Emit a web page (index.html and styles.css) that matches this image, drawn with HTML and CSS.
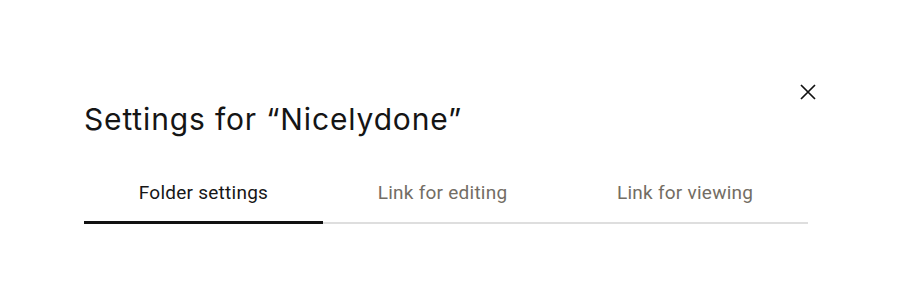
FILE: index.html
```html
<!DOCTYPE html>
<html lang="en">
<head>
<meta charset="utf-8">
<link rel="stylesheet" href="styles.css">
</head>
<body>
<div class="dialog">
  <div class="header">
    <h1 class="title">Settings for “Nicelydone”</h1>
    <button class="close" aria-label="Close">
      <svg width="16" height="16" viewBox="0 0 16 16"><path d="M1 1L15 15M15 1L1 15" stroke="#111" stroke-width="1.7" fill="none"/></svg>
    </button>
  </div>
  <div class="tabs">
    <div class="tab active">Folder settings</div>
    <div class="tab">Link for editing</div>
    <div class="tab">Link for viewing</div>
  </div>
</div>
</body>
</html>
```
FILE: styles.css
```css
html, body {
  margin: 0;
  padding: 0;
  background: #fff;
}
.dialog {
  width: 724px;
  padding: 84px 0 0 84px;
}
.header {
  display: flex;
  justify-content: space-between;
  align-items: flex-start;
  height: 82px;
}
.title {
  margin: 17px 0 0 0;
  font-family: Inter, sans-serif;
  font-weight: 400;
  font-size: 30px;
  line-height: 36px;
  color: #151515;
  letter-spacing: 0.85px;
}
.close {
  border: 0;
  background: none;
  padding: 0;
  margin: 0 -8px 0 0;
  width: 16px;
  height: 16px;
  display: flex;
  align-items: center;
  justify-content: center;
}
.tabs {
  display: flex;
  border-bottom: 2px solid #dedede;
}
.tab {
  flex: 1 1 auto;
  text-align: center;
  font-family: Roboto, "Liberation Sans", sans-serif;
  font-size: 19px;
  letter-spacing: 0.25px;
  line-height: 24px;
  padding: 15px 0 16px;
  color: #736d64;
  margin-bottom: -2px;
  border-bottom: 3px solid transparent;
}
.tab.active {
  color: #161616;
  border-bottom-color: #111;
}
```
